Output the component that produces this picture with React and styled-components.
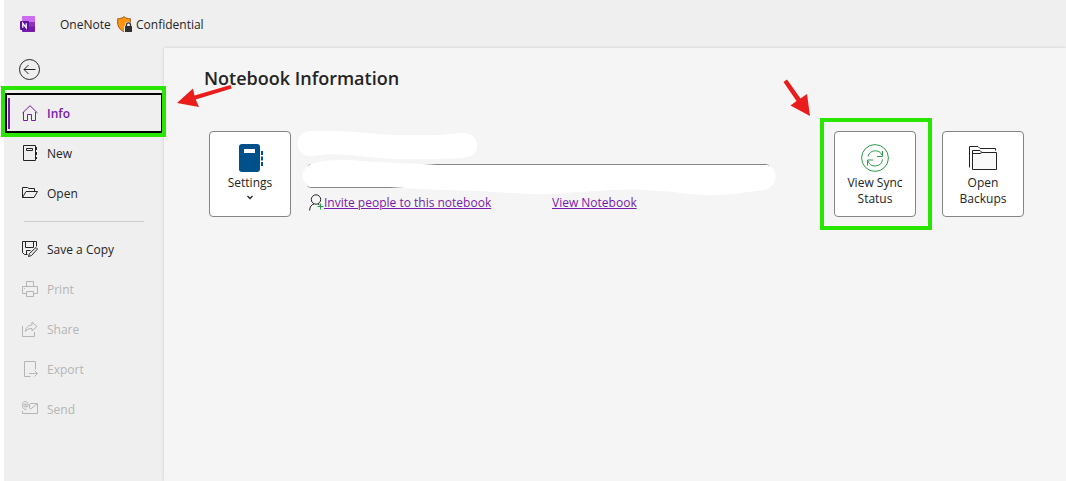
import styled, { createGlobalStyle } from "styled-components"

const navItems = [
    { name: "Info", icon: HomeIcon, active: true },
    { name: "New", icon: NotebookIcon },
    { name: "Open", icon: FolderIcon },
]

const fileItems = [
    { name: "Save a Copy", icon: SaveIcon },
    { name: "Print", icon: PrintIcon, disabled: true },
    { name: "Share", icon: ShareIcon, disabled: true },
    { name: "Export", icon: ExportIcon, disabled: true },
    { name: "Send", icon: SendIcon, disabled: true },
]

export default function App() {
    return (
        <>
            <GlobalStyle />
            <Page>
                <Header>
                    <LogoIcon />
                    <AppName>OneNote</AppName>
                    <ShieldIcon />
                    <Label>Confidential</Label>
                </Header>
                <Body>
                    <Sidebar>
                        <BackButton aria-label="Back"><BackIcon /></BackButton>
                        <Menu items={navItems} />
                        <Divider />
                        <Menu items={fileItems} />
                    </Sidebar>
                    <Main>
                        <h1>Notebook Information</h1>
                        <Content>
                            <Tile>
                                <BookIcon />
                                Settings
                                <ChevronIcon />
                            </Tile>
                            <Details>
                                <PathInput type="text" aria-label="Notebook location" readOnly />
                                <Links>
                                    <Invite>
                                        <PersonIcon />
                                        <a href="#invite">Invite people to this notebook</a>
                                    </Invite>
                                    <a href="#notebook">View Notebook</a>
                                </Links>
                                <Redaction />
                            </Details>
                            <Actions>
                                <Marked>
                                    <Tile>
                                        <SyncIcon />
                                        View Sync Status
                                    </Tile>
                                    <TileFrame />
                                    <SyncArrow />
                                </Marked>
                                <Tile>
                                    <BackupsIcon />
                                    Open Backups
                                </Tile>
                            </Actions>
                        </Content>
                    </Main>
                </Body>
            </Page>
        </>
    )
}

function Menu({ items }) {
    return (
        <nav>
            {items.map(({ name, icon: Icon, active, disabled }) => (
                <Marked key={name}>
                    <MenuItem $active={active} disabled={disabled}>
                        <Icon />
                        <Label>{name}</Label>
                    </MenuItem>
                    {active && <MenuFrame />}
                    {active && <InfoArrow />}
                </Marked>
            ))}
        </nav>
    )
}

function LogoIcon() {
    return (
        <svg width="16" height="16" viewBox="0 0 16 16">
            <rect x="2" y="0" width="13" height="16" rx="1.5" fill="#9332bf" />
            <path d="M3.5 0h10A1.5 1.5 0 0 1 15 1.5V6H2V1.5A1.5 1.5 0 0 1 3.5 0z" fill="#cb6cf3" />
            <path d="M9 10.5h6v4a1.5 1.5 0 0 1-1.5 1.5h-10A1.5 1.5 0 0 1 2 14.5V13z" fill="#7719aa" />
            <rect x="0" y="5" width="9" height="9" rx="1" fill="#5c1299" />
            <path d="M2.8 11.8V7.2l3.4 4.6V7.2" fill="none" stroke="#fff" strokeWidth="1.3" />
        </svg>
    )
}

function ShieldIcon() {
    return (
        <svg width="15" height="17" viewBox="0 0 15 17">
            <path d="M7 .7C5.3 2.2 3 2.7.7 2.7V7c0 4 2.6 7 6.3 8.7C10.8 14 13.3 11 13.3 7V2.7C11 2.7 8.7 2.2 7 .7z" fill="#ff9510" stroke="#9b5a16" />
            <path d="M7 10h1V8.5a3.3 3.3 0 0 1 6.5 0V10h.5v7H7z" fill="#efefef" />
            <rect x="8" y="10" width="7" height="6" rx=".5" fill="#303030" />
            <path d="M9.5 10.5V8.8a2 2 0 0 1 4 0v1.7" fill="none" stroke="#303030" strokeWidth="1.3" />
        </svg>
    )
}

function BackIcon() {
    return (
        <LineIcon width="22" height="22" viewBox="0 0 22 22">
            <circle cx="11.5" cy="11.5" r="10" />
            <path d="M17.5 11.5H6M10.5 7L6 11.5l4.5 4.5" />
        </LineIcon>
    )
}

function HomeIcon() {
    return (
        <LineIcon width="16" height="16" viewBox="0 0 16 16">
            <path d="M.5 8L8 .7 15.5 8M1.5 7v8.5h4v-6h4v6h4V7" />
        </LineIcon>
    )
}

function NotebookIcon() {
    return (
        <LineIcon width="16" height="16" viewBox="0 0 16 16">
            <path d="M1.5.5h12v15h-12zM4.5 3.5h6v2h-6z" />
            <path d="M14 2v3M14 7v3M14 12v2" strokeWidth="2" />
        </LineIcon>
    )
}

function FolderIcon() {
    return (
        <LineIcon width="16" height="16" viewBox="0 0 16 16">
            <path d="M.5 13V2.5h5l1.5 1h5.5v3M.5 12.5l3.5-6h11.5l-3.5 6H.5" />
        </LineIcon>
    )
}

function SaveIcon() {
    return (
        <LineIcon width="16" height="16" viewBox="0 0 16 16">
            <path d="M5.5 13.5h-3l-2-2V.5h14v5M3.5.5v6h8v-6M4.5 13.5v-4h4" />
            <path d="M6.5 15.5l1-3 6.5-6L15.500 8l-6 6.500z" />
        </LineIcon>
    )
}

function PrintIcon() {
    return (
        <LineIcon width="16" height="16" viewBox="0 0 16 16">
            <path d="M4.5 5.5v-5h7v5M4.5 12.5h-4v-7h15v7h-4M4.5 10.5h7v5h-7zM2 7.5h1" />
        </LineIcon>
    )
}

function ShareIcon() {
    return (
        <LineIcon width="16" height="16" viewBox="0 0 16 16">
            <path d="M.5 5v10.5h12V11" />
            <path d="M3.5 10.5c0-4 3-6.500 6.500-6.500V1l5 4.500-5 4.500V7.500c-3 0-5 .7-6.500 3z" />
        </LineIcon>
    )
}

function ExportIcon() {
    return (
        <LineIcon width="16" height="16" viewBox="0 0 16 16">
            <path d="M8.5 15.5h-6V.5h11v8M7 12.5h8.500M12.500 9.500l3 3-3 3" />
        </LineIcon>
    )
}

function SendIcon() {
    return (
        <LineIcon width="16" height="16" viewBox="0 0 16 16">
            <path d="M8 2.500h7.500v10H.5V10M15.500 2.500L8 8.500" />
            <path d="M4.500 8.300C2.500 9 .5 7.500.5 4.500S1.500.5 3.300.5 6 1.800 6 4s-2 2.500-2 .8V2.800M4 4.800c0 1.700-2 1.700-2-.5s2-2 2-.5M7.500 3v4.500" />
        </LineIcon>
    )
}

function BookIcon() {
    return (
        <svg width="28" height="28" viewBox="0 0 28 28">
            <rect x="3" y="0" width="21" height="28" rx="3" fill="#00508c" />
            <rect x="8" y="5" width="11" height="4" fill="#fff" />
            <path d="M25 7h2v4h-2zM25 12.500h2v4h-2zM25 18h2v4h-2z" fill="#00508c" />
        </svg>
    )
}

function ChevronIcon() {
    return (
        <LineIcon width="16" height="8" viewBox="0 0 16 8">
            <path d="M5.5 2L8 4.500 10.500 2" strokeWidth="1.3" />
        </LineIcon>
    )
}

function PersonIcon() {
    return (
        <LineIcon width="15" height="17" viewBox="0 0 15 17">
            <circle cx="7" cy="5.5" r="4.7" />
            <path d="M.6 16.5c.2-3.700 1.700-6 4.400-6.500M9 10l1.500 1" />
            <path d="M11.5 9.500v6M8.500 12.500h6" stroke="#22a04a" />
        </LineIcon>
    )
}

function SyncIcon() {
    return (
        <LineIcon width="28" height="28" viewBox="0 0 28 28" stroke="#2c9c4b">
            <circle cx="14" cy="14" r="13.4" />
            <path d="M7 12.5A7.500 7.500 0 0 1 21 11M21.500 7v5.500H16M21.500 15.500A7.500 7.500 0 0 1 7 17M6.500 21.500V16H12" />
        </LineIcon>
    )
}

function BackupsIcon() {
    return (
        <LineIcon width="28" height="28" viewBox="0 0 28 28">
            <path d="M.5 23.5v-21h8.500l2 2h15.500v2" />
            <path d="M3.5 25.5v-19H11l2 2h14.500v17z" fill="#fafafa" />
            <path d="M3.5 9.5H11l2-1" />
        </LineIcon>
    )
}

function InfoArrow() {
    return (
        <InfoArrowSvg width="56" height="24" viewBox="177 85 56 24">
            <path d="M177 103l16-14.500 1.500 7 36-10.500 1.200 3.500-36 11 3.300 7.500z" />
        </InfoArrowSvg>
    )
}

function SyncArrow() {
    return (
        <SyncArrowSvg width="28" height="38" viewBox="783 79 28 38">
            <path d="M810 116l-19.500-10.500 6-4.500-13-19 3.500-2.500 13.500 19 6.500-4.500z" />
        </SyncArrowSvg>
    )
}

// white marker strokes that hide the notebook's name and location
function Redaction() {
    return (
        <RedactionSvg width="480" height="66" viewBox="297 131 480 66">
            <path d="M311 131C330 130 355 132 377 134C400 136 425 135 435 135C447 135 455 133 463 133C481 133 481 154 468 157C455 159 440 159 403 159C385 159 370 157 350 155C335 154 325 154 314 156C293 158 292 132 311 131Z" />
            <path d="M319 162C333 159 350 160 363 161C385 163 410 163 437 165H767C779 168 779 187 764 190C745 192 735 195 710 195C690 195 680 192 660 191C645 190 635 189 617 190C600 190 590 192 573 192C560 194 550 194 530 194C510 193 495 192 480 191C455 190 430 190 405 188L390 187H310C299 182 299 164 319 162Z" />
        </RedactionSvg>
    )
}

const GlobalStyle = createGlobalStyle`
    * {
        box-sizing: border-box;
    }
    body {
        margin: 0;
        background-color: #ffffff;
        color: #242424;
        font-family: "Open Sans", "Noto Sans", sans-serif;
        font-size: 12px;
        line-height: 16px;
    }
    button, input {
        font: inherit;
        color: inherit;
    }
    svg {
        display: block;
        flex-shrink: 0;
    }
`

const Page = styled.div`
    display: flex;
    flex-direction: column;
    min-height: 100vh;
    margin-left: 4px;
    background-color: #efefef;
`

const Header = styled.header`
    display: flex;
    align-items: center;
    gap: 4px;
    height: 48px;
    padding-left: 16px;
`

const Label = styled.span`
    padding-top: 2px;
`

const AppName = styled(Label)`
    width: 53px;
    margin-left: 20px;
`

const Body = styled.div`
    display: flex;
    flex: 1;
`

const Sidebar = styled.aside`
    width: 160px;
    flex-shrink: 0;
    padding: 10px 1px 0;
`

const BackButton = styled.button`
    display: block;
    margin: 0 0 13px 13px;
    padding: 0;
    border: none;
    background: none;
    svg{
        overflow: visible;
    }
`

const Marked = styled.div`
    position: relative;
`

const MenuItem = styled.button`
    display: flex;
    align-items: center;
    gap: 9px;
    width: 100%;
    height: 40px;
    padding: 0 0 0 ${(props) => props.$active ? "12px" : "17px"};
    border: ${(props) => props.$active ? "2px solid #000000" : "none"};
    background: none;
    color: ${(props) => props.$active ? "#7719aa" : "#242424"};
    font-weight: ${(props) => props.$active ? 600 : 400};
    text-align: left;
    &:disabled{
        color: #b5b5b5;
    }
    &::before{
        content: ${(props) => props.$active ? '""' : "none"};
        width: 2px;
        height: 31px;
        margin: 0 3px 0 -11px;
        background-color: #7719aa;
    }
`

const Divider = styled.hr`
    height: 1px;
    margin: 8px 19px 7px;
    border: none;
    background-color: #cccccc;
`

const Frame = styled.div`
    position: absolute;
    border: 4px solid #28e600;
    pointer-events: none;
`

const MenuFrame = styled(Frame)`
    inset: -7px -3px -4px -4px;
`

const TileFrame = styled(Frame)`
    inset: -13px -16px -13px -14px;
`

const LineIcon = styled.svg`
    fill: none;
    stroke: ${(props) => props.stroke || "currentColor"};
`

const Overlay = styled.svg`
    position: absolute;
    z-index: 1;
    pointer-events: none;
`

const InfoArrowSvg = styled(Overlay)`
    top: -8px;
    left: 172px;
    fill: #ea1c1c;
`

const SyncArrowSvg = styled(Overlay)`
    top: -52px;
    left: -51px;
    fill: #ea1c1c;
`

const RedactionSvg = styled(Overlay)`
    top: 0;
    left: -10px;
    fill: #ffffff;
`

const Main = styled.main`
    flex: 1;
    padding: 16px 42px 0 40px;
    background-color: #f5f5f5;
    box-shadow: 0 0 3px rgba(0, 0, 0, 0.15);
    h1{
        margin: 0 0 39px;
        font-size: 18px;
        line-height: 28px;
        font-weight: 600;
    }
`

const Content = styled.div`
    display: flex;
    gap: 16px;
    padding-left: 5px;
`

const Tile = styled.button`
    display: flex;
    flex-direction: column;
    align-items: center;
    gap: 3px;
    width: 82px;
    height: 86px;
    padding: 12px 8px 0;
    border: 1px solid #858585;
    border-radius: 4px;
    background-color: #ffffff;
    font-weight: 500;
`

const Details = styled.div`
    position: relative;
    flex: 1;
    padding-top: 33px;
`

const PathInput = styled.input`
    display: block;
    width: 100%;
    height: 24px;
    border: 1px solid #858585;
    border-radius: 4px;
    background-color: #ffffff;
`

const Links = styled.div`
    display: grid;
    grid-template-columns: 245px auto;
    align-items: center;
    margin-top: 6px;
    a{
        color: #7719aa;
    }
`

const Invite = styled.div`
    display: flex;
    align-items: center;
    padding-left: 2px;
`

const Actions = styled.div`
    display: flex;
    gap: 26px;
    margin-left: 48px;
`
